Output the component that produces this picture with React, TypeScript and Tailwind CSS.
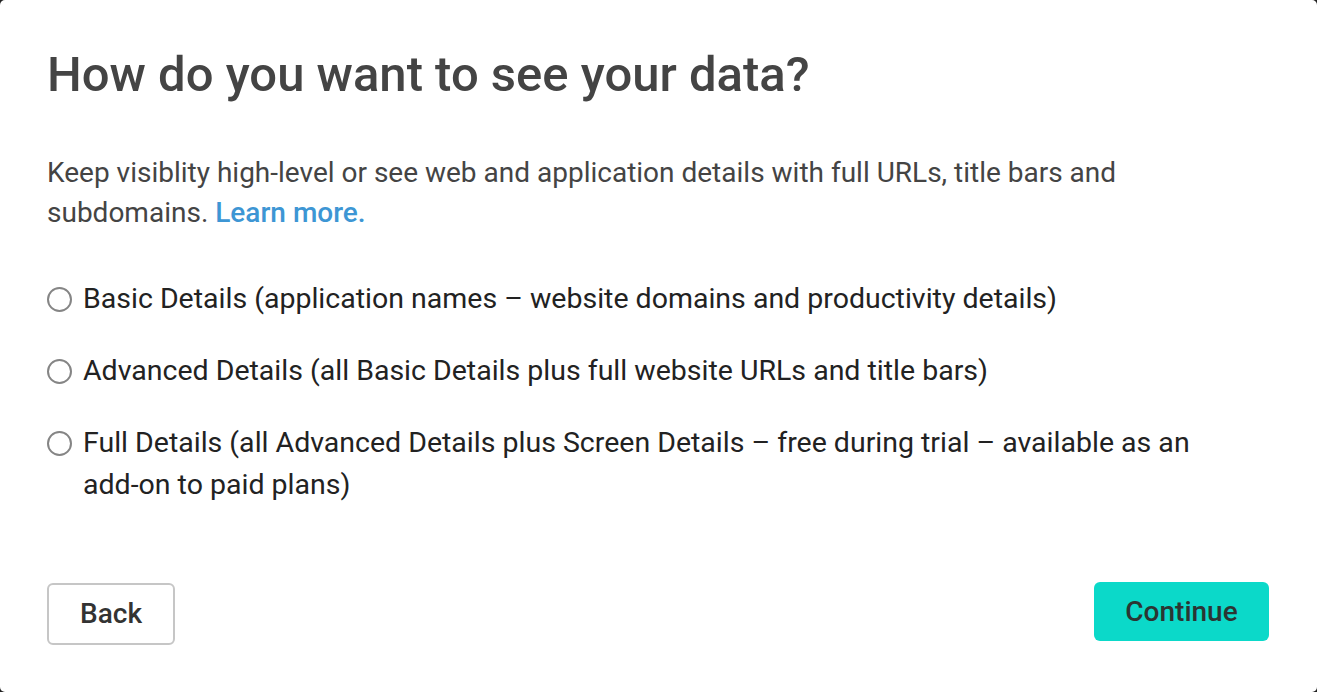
const options = [
  "Basic Details (application names – website domains and productivity details)",
  "Advanced Details (all Basic Details plus full website URLs and title bars)",
  "Full Details (all Advanced Details plus Screen Details – free during trial – available as an",
];

const Radio = () => (
  <span className="mt-[9px] inline-block size-[25px] shrink-0 rounded-full border-2 border-[#858585] bg-white" />
);

export default function App() {
  return (
    <div className="h-[692px] w-[1317px] bg-[#222] font-['Roboto',sans-serif]">
      <div className="flex h-full flex-col rounded-[5px] bg-white pt-[47px] pr-[48px] pl-[47px]">
        <h1 className="text-[49px] leading-[56px] font-medium text-[#444]">
          How do you want to see your data?
        </h1>
        <p className="mt-[50px] text-[28px] leading-[40px] text-[#444]">
          Keep visiblity high-level or see web and application details with full URLs, title bars and
          subdomains.{" "}
          <a className="font-medium text-[#3d96d4]" href="#">
            Learn more.
          </a>
        </p>
        <div className="mt-[45px] flex flex-col gap-[30px]">
          {options.map((o, i) => (
            <label key={o} className="flex gap-[11px] text-[28.5px] leading-[42px] text-[#222]">
              <Radio />
              <span>
                {o}
                {i === 2 && (
                  <>
                    {" "}
                    <span className="whitespace-nowrap">add-on</span> to paid plans)
                  </>
                )}
              </span>
            </label>
          ))}
        </div>
        <div className="mt-[77px] flex items-start justify-between">
          <button className="h-[62px] w-[128px] rounded-[6px] border-2 border-[#c6c6c6] bg-white text-[28px] font-medium text-[#333]">
            Back
          </button>
          <button className="-mt-px h-[59px] w-[175px] rounded-[6px] bg-[#0bd9c9] text-[28px] font-medium text-[#2b3533]">
            Continue
          </button>
        </div>
      </div>
    </div>
  );
}
